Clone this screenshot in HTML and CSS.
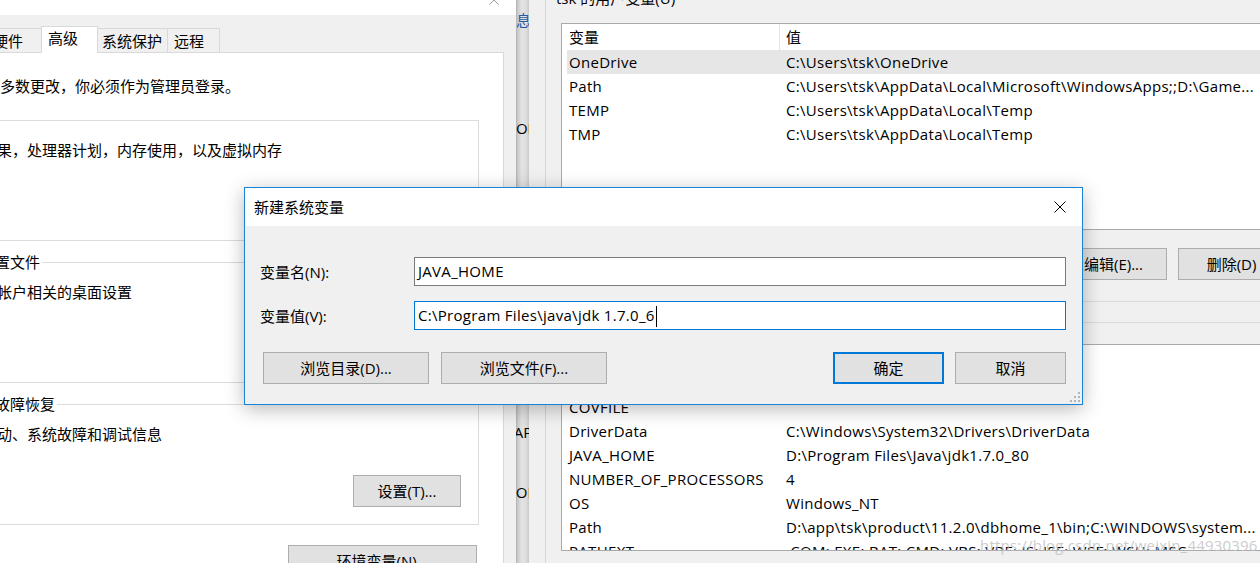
FILE: index.html
```html
<!DOCTYPE html>
<html lang="zh-CN">
<head>
<meta charset="utf-8">
<title>新建系统变量</title>
<link rel="stylesheet" href="styles.css">
</head>
<body>
<div class="desk">

  <div class="win back-win">
    <div class="bk bk-link">信息</div>
    <div class="bk bk-2">DOM</div>
    <div class="bk bk-3">LAPTOP</div>
    <div class="bk bk-4">WORKGROUP</div>
  </div>

  <div class="win sys-win">
    <div class="sys-title">
      <span class="sys-close"><svg width="10" height="10" viewBox="0 0 10 10"><path d="M0.5 0.5 L9.5 9.5 M9.5 0.5 L0.5 9.5" stroke="#9a9a9a" stroke-width="1" fill="none"/></svg></span>
    </div>
    <div class="sys-body">
      <div class="tabs">
        <div class="tab tab-w70">计算机名</div>
        <div class="tab tab-w54">硬件</div>
        <div class="tab tab-active">高级</div>
        <div class="tab tab-w71">系统保护</div>
        <div class="tab tab-w53">远程</div>
      </div>
      <div class="panel">
        <p class="note">要进行大多数更改，你必须作为管理员登录。</p>
        <fieldset class="group group-first">
          <legend>性能</legend>
          <p class="gtext">视觉效果，处理器计划，内存使用，以及虚拟内存</p>
          <div class="grp-btns"><button class="btn btn-set">设置(S)...</button></div>
        </fieldset>
        <fieldset class="group">
          <legend>用户配置文件</legend>
          <p class="gtext">与登录帐户相关的桌面设置</p>
          <div class="grp-btns"><button class="btn btn-set">设置(E)...</button></div>
        </fieldset>
        <fieldset class="group">
          <legend>启动和故障恢复</legend>
          <p class="gtext">系统启动、系统故障和调试信息</p>
          <div class="grp-btns"><button class="btn btn-set">设置(T)...</button></div>
        </fieldset>
        <div class="env-row"><button class="btn btn-env">环境变量(N)...</button></div>
      </div>
    </div>
  </div>

  <div class="win env-win">
    <div class="env-label">tsk 的用户变量(U)</div>
    <div class="lv lv-user">
      <div class="lv-head"><div class="c1">变量</div><div class="c2">值</div></div>
      <div class="lv-row sel"><div class="c1">OneDrive</div><div class="c2">C:\Users\tsk\OneDrive</div></div>
      <div class="lv-row"><div class="c1">Path</div><div class="c2">C:\Users\tsk\AppData\Local\Microsoft\WindowsApps;;D:\Game...</div></div>
      <div class="lv-row"><div class="c1">TEMP</div><div class="c2">C:\Users\tsk\AppData\Local\Temp</div></div>
      <div class="lv-row"><div class="c1">TMP</div><div class="c2">C:\Users\tsk\AppData\Local\Temp</div></div>
    </div>
    <div class="env-btns">
      <button class="btn btn-env-s">新建(N)...</button>
      <button class="btn btn-env-s">编辑(E)...</button>
      <button class="btn btn-env-s">删除(D)</button>
    </div>
    <div class="sep sep-1"></div>
    <div class="sep sep-2"></div>
    <div class="lv lv-sys">
      <div class="lv-head"><div class="c1">变量</div><div class="c2">值</div></div>
      <div class="lv-row"><div class="c1">ComSpec</div><div class="c2">C:\WINDOWS\system32\cmd.exe</div></div>
      <div class="lv-row"><div class="c1">COVFILE</div><div class="c2"></div></div>
      <div class="lv-row"><div class="c1">DriverData</div><div class="c2">C:\Windows\System32\Drivers\DriverData</div></div>
      <div class="lv-row"><div class="c1">JAVA_HOME</div><div class="c2">D:\Program Files\Java\jdk1.7.0_80</div></div>
      <div class="lv-row"><div class="c1">NUMBER_OF_PROCESSORS</div><div class="c2">4</div></div>
      <div class="lv-row"><div class="c1">OS</div><div class="c2">Windows_NT</div></div>
      <div class="lv-row"><div class="c1">Path</div><div class="c2">D:\app\tsk\product\11.2.0\dbhome_1\bin;C:\WINDOWS\system...</div></div>
      <div class="lv-row"><div class="c1">PATHEXT</div><div class="c2">.COM;.EXE;.BAT;.CMD;.VBS;.VBE;.JS;.JSE;.WSF;.WSH;.MSC</div></div>
    </div>
  </div>

  <div class="watermark">https://blog.csdn.net/weixin_44930396</div>

  <div class="dialog">
    <div class="dlg-title">
      <span class="dlg-caption">新建系统变量</span>
      <svg class="dlg-x" width="12" height="12" viewBox="0 0 12 12"><path d="M0.5 0.5 L11.5 11.5 M11.5 0.5 L0.5 11.5" stroke="#000" stroke-width="1" fill="none"/></svg>
    </div>
    <div class="dlg-body">
      <div class="field">
        <label class="f-label">变量名(N):</label>
        <div class="input">JAVA_HOME</div>
      </div>
      <div class="field field-2">
        <label class="f-label">变量值(V):</label>
        <div class="input input-focus">C:\Program Files\java\jdk 1.7.0_6<span class="caret"></span></div>
      </div>
      <div class="dlg-btns">
        <button class="btn btn-browse">浏览目录(D)...</button>
        <button class="btn btn-browse btn-browse-2">浏览文件(F)...</button>
        <div class="spacer"></div>
        <button class="btn btn-ok">确定</button>
        <button class="btn btn-cancel">取消</button>
      </div>
    </div>
    <svg class="grip" width="11" height="11" viewBox="0 0 11 11">
      <rect x="9" y="1" width="2" height="2" fill="#b4b4b4"/>
      <rect x="5" y="5" width="2" height="2" fill="#b4b4b4"/>
      <rect x="9" y="5" width="2" height="2" fill="#b4b4b4"/>
      <rect x="1" y="9" width="2" height="2" fill="#b4b4b4"/>
      <rect x="5" y="9" width="2" height="2" fill="#b4b4b4"/>
      <rect x="9" y="9" width="2" height="2" fill="#b4b4b4"/>
    </svg>
  </div>

</div>
</body>
</html>
```

FILE: styles.css
```css
* { box-sizing: border-box; }

html, body {
  margin: 0;
  padding: 0;
}

body {
  width: 1260px;
  height: 563px;
  overflow: hidden;
  background: #f0f0f0;
  font-family: "Open Sans", "Noto Sans CJK SC", sans-serif;
  font-size: 15px;
  line-height: 20px;
  color: #000;
}

.desk {
  position: relative;
  width: 1260px;
  height: 563px;
  overflow: hidden;
}

.win { position: absolute; }

/* ---------- window behind (control panel) ---------- */
.back-win {
  left: 516px;
  top: 0;
  width: 13px;
  height: 563px;
  overflow: hidden;
  background: linear-gradient(to right, #c6c6c6 0, #d9d9d9 2px, #e3e3e3 6px, #dedede 10px, #c9c9c9 13px);
}
.bk { white-space: nowrap; }
.bk-link { color: #1f5ca8; margin: 10px 0 0 -15px; font-size: 15px; }
.bk-2 { margin: 88px 0 0 -11px; }
.bk-3 { margin: 284px 0 0 -10px; }
.bk-4 { margin: 40px 0 0 -14px; }

/* ---------- system properties window ---------- */
.sys-win {
  left: -100px;
  top: -16px;
  width: 616px;
  height: 600px;
  background: #f0f0f0;
  z-index: 2;
  box-shadow: 2px 0 4px rgba(0, 0, 0, 0.12);
}

.sys-title {
  height: 31px;
  background: #fff;
  display: flex;
  justify-content: flex-end;
  align-items: center;
  padding-right: 17px;
}
.sys-close {
  width: 10px;
  height: 10px;
  display: block;
}
.sys-close svg { display: block; }

.sys-body {
  padding: 11px 12px 0 12px;
}

.tabs {
  display: flex;
  align-items: flex-end;
  height: 27px;
  padding-left: 7px;
  margin-bottom: -1px;
  position: relative;
  z-index: 1;
}
.tab {
  height: 24px;
  margin-bottom: 1px;
  margin-left: -1px;
  border: 1px solid #d9d9d9;
  border-bottom: 0;
  background: #f0f0f0;
  padding: 2px 0 0 4px;
  white-space: nowrap;
}
.tab:first-child { margin-left: 0; }
.tab-w70 { width: 70px; }
.tab-w54 { width: 54px; }
.tab-w71 { width: 71px; }
.tab-w53 { width: 53px; padding-left: 6px; }
.tab-active {
  width: 57px;
  height: 27px;
  margin-bottom: 0;
  background: #fff;
  padding: 1px 0 0 6px;
  position: relative;
  z-index: 2;
}

.panel {
  background: #fff;
  border: 1px solid #d9d9d9;
  height: 560px;
  padding: 23px 0 0 0;
}

.note {
  margin: 0;
  padding-left: 27px;
  white-space: nowrap;
}

.group {
  margin: 11px 24px 0 12px;
  padding: 10px 17px 17px 26px;
  border: 1px solid #dcdcdc;
  min-width: 0;
}
.group-first { margin-top: 14px; }
.group legend {
  padding: 0 2px;
  margin-left: -4px;
  line-height: 20px;
  white-space: nowrap;
}
.gtext {
  margin: 0;
  white-space: nowrap;
}
.grp-btns {
  display: flex;
  justify-content: flex-end;
  margin-top: 31px;
}

.btn {
  height: 32px;
  margin: 0;
  padding: 0;
  background: #e1e1e1;
  border: 1px solid #adadad;
  border-radius: 0;
  font: inherit;
  color: #000;
  display: flex;
  align-items: center;
  justify-content: center;
  white-space: nowrap;
}
.btn-set { width: 108px; }

.env-row {
  display: flex;
  justify-content: flex-end;
  margin: 20px 26px 0 0;
}
.btn-env { width: 189px; }

/* ---------- environment variables window ---------- */
.env-win {
  left: 545px;
  top: -40px;
  width: 780px;
  height: 640px;
  background: #f0f0f0;
  border-left: 1px solid #d6d6d6;
  padding: 28px 0 0 15px;
  z-index: 1;
}

.env-label {
  margin-left: -5px;
  white-space: nowrap;
}

.lv {
  margin-top: 15px;
  width: 760px;
  height: 207px;
  background: #fff;
  border: 1px solid #a9a9a9;
  overflow: hidden;
}

.lv-head {
  display: grid;
  grid-template-columns: 218px 1fr;
  height: 26px;
  line-height: 26px;
}
.lv-head .c1 {
  padding-left: 7px;
  border-right: 1px solid #e5e5e5;
}
.lv-head .c2 { padding-left: 6px; }

.lv-row {
  display: grid;
  grid-template-columns: 213px 1fr;
  margin-left: 5px;
  height: 24px;
  line-height: 24px;
  white-space: nowrap;
  letter-spacing: 0.3px;
}
.lv-row.sel { background: #e6e6e6; }
.lv-row .c1 { padding-left: 2px; overflow: hidden; }
.lv-row .c2 { padding-left: 6px; overflow: hidden; }

.env-btns {
  display: flex;
  gap: 11px;
  margin-top: 18px;
  padding-left: 381px;
}
.btn-env-s { width: 107px; }

.sep {
  height: 1px;
  background: #dadada;
  margin-left: -15px;
}
.sep-1 { margin-top: 21px; }
.sep-2 { margin-top: 20px; }

.lv-sys { margin-top: 21px; }

.watermark {
  position: absolute;
  left: 980px;
  top: 535px;
  z-index: 3;
  color: rgba(190, 190, 190, 0.8);
  white-space: nowrap;
  font-size: 15px;
  letter-spacing: 0.2px;
}

/* ---------- new system variable dialog ---------- */
.dialog {
  position: absolute;
  left: 244px;
  top: 187px;
  width: 839px;
  height: 218px;
  z-index: 10;
  background: #f0f0f0;
  border: 1px solid #1883d7;
  box-shadow: 0 4px 18px rgba(0, 0, 0, 0.28);
  display: flex;
  flex-direction: column;
}

.dlg-title {
  height: 38px;
  flex: none;
  background: #fff;
  display: flex;
  align-items: center;
  justify-content: space-between;
  padding: 0 16px 0 9px;
}
.dlg-caption { white-space: nowrap; }
.dlg-x { display: block; }

.dlg-body {
  padding: 31px 16px 20px 15px;
}

.field {
  display: flex;
  align-items: center;
}
.field-2 { margin-top: 15px; }
.f-label {
  width: 154px;
  flex: none;
  white-space: nowrap;
}
.input {
  flex: 1;
  height: 29px;
  line-height: 27px;
  background: #fff;
  border: 1px solid #7a7a7a;
  padding-left: 3px;
  white-space: nowrap;
  letter-spacing: 0.3px;
}
.input-focus { border-color: #0078d7; }
.caret {
  display: inline-block;
  width: 1px;
  height: 21px;
  background: #000;
  vertical-align: middle;
  margin-left: 1px;
}

.dlg-btns {
  display: flex;
  margin-top: 22px;
}
.btn-browse { width: 166px; margin-left: 3px; }
.btn-browse-2 { margin-left: 12px; }
.spacer { flex: 1; }
.btn-ok {
  width: 111px;
  border: 2px solid #0078d7;
}
.btn-cancel { width: 111px; margin-left: 11px; }

.grip {
  position: absolute;
  right: 2px;
  bottom: 2px;
  display: block;
}
```
